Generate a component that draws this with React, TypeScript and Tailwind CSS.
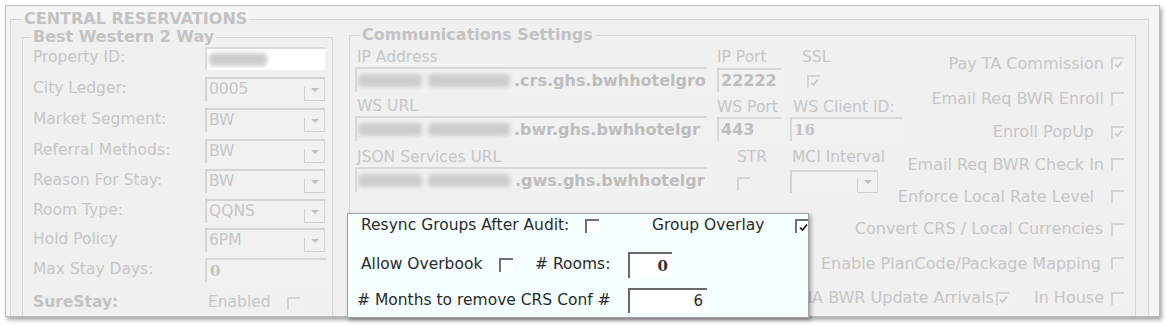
import type { ReactNode } from "react";

function Tick({ color }: { color: string }) {
  return (
    <svg width="11" height="11" viewBox="0 0 11 11" className="block">
      <path d="M2 5.5 L4.5 8 L9 2.5" fill="none" stroke={color} strokeWidth="1.6" />
    </svg>
  );
}

function GrayBox({ checked = false, className = "" }: { checked?: boolean; className?: string }) {
  return (
    <span
      className={`flex h-[13px] w-[13px] shrink-0 items-center justify-center border-t-2 border-l-2 border-t-[#d4d4d4] border-l-[#d4d4d4] bg-[#f2f2f2] ${className}`}
    >
      {checked && <Tick color="#c4c4c4" />}
    </span>
  );
}

function DarkBox({ checked = false, className = "" }: { checked?: boolean; className?: string }) {
  return (
    <span
      className={`flex h-[14px] w-[14px] shrink-0 items-center justify-center border-t-2 border-l-2 border-t-[#707070] border-l-[#707070] bg-white ${className}`}
    >
      {checked && <Tick color="#111111" />}
    </span>
  );
}

function Blur({ w }: { w: string }) {
  return <span className={`inline-block h-[13px] shrink-0 rounded-sm bg-[#cdcdcd] blur-[2px] ${w}`} />;
}

function Field({ children, className = "" }: { children?: ReactNode; className?: string }) {
  return (
    <div
      className={`flex items-center overflow-hidden whitespace-nowrap border-t-2 border-l-2 border-t-[#d8d8d8] border-l-[#d8d8d8] bg-[#f1f1f1] ${className}`}
    >
      {children}
    </div>
  );
}

function Select({ value = "", className = "" }: { value?: string; className?: string }) {
  return (
    <div
      className={`flex border-t-2 border-l-2 border-r border-t-[#d4d4d4] border-l-[#d4d4d4] border-r-[#d4d4d4] bg-[#f1f1f1] ${className}`}
    >
      <span className="flex-1 pl-[2px] leading-[21px] text-[#c6c6c6]">{value}</span>
      <span className="mt-auto flex h-[14px] w-[20px] items-start justify-center border-l border-b border-[#d0d0d0]">
        <svg width="8" height="4" viewBox="0 0 8 4" className="mt-[1px] block">
          <path d="M0 0h8L4 4z" fill="#bfbfbf" />
        </svg>
      </span>
    </div>
  );
}

const bwRows: { label: string; mt: string; field: ReactNode }[] = [
  {
    label: "Property ID:",
    mt: "mt-0",
    field: (
      <div className="flex h-[23px] w-[120px] items-center border-t-2 border-l-2 border-t-[#dcdcdc] border-l-[#dcdcdc] bg-white pl-[2px]">
        <Blur w="w-[58px]" />
      </div>
    ),
  },
  { label: "City Ledger:", mt: "mt-[7px]", field: <Select value="0005" className="h-[24px] w-[120px]" /> },
  { label: "Market Segment:", mt: "mt-[7px]", field: <Select value="BW" className="h-[24px] w-[120px]" /> },
  { label: "Referral Methods:", mt: "mt-[7px]", field: <Select value="BW" className="h-[24px] w-[120px]" /> },
  { label: "Reason For Stay:", mt: "mt-[6px]", field: <Select value="BW" className="h-[24px] w-[120px]" /> },
  { label: "Room Type:", mt: "mt-[6px]", field: <Select value="QQNS" className="h-[24px] w-[120px]" /> },
  { label: "Hold Policy", mt: "mt-[5px]", field: <Select value="6PM" className="h-[24px] w-[120px]" /> },
  {
    label: "Max Stay Days:",
    mt: "mt-[6px]",
    field: (
      <Field className="h-[24px] w-[122px] pl-[3px]">
        <span className="font-['DejaVu_Serif',serif] text-[15px] font-bold text-[#c3c3c3]">0</span>
      </Field>
    ),
  },
];

const rightRows: { label: string; h: string; checked: boolean; gap: string }[] = [
  { label: "Pay TA Commission", h: "h-[35px]", checked: true, gap: "mr-[7px]" },
  { label: "Email Req BWR Enroll", h: "h-[35px]", checked: false, gap: "mr-[7px]" },
  { label: "Enroll PopUp", h: "h-[32px]", checked: true, gap: "mr-[17px]" },
  { label: "Email Req BWR Check In", h: "h-[33px]", checked: false, gap: "mr-[7px]" },
  { label: "Enforce Local Rate Level", h: "h-[31px]", checked: false, gap: "mr-[17px]" },
  { label: "Convert CRS / Local Currencies", h: "h-[34px]", checked: false, gap: "mr-[8px]" },
  { label: "Enable PlanCode/Package Mapping", h: "h-[35px]", checked: false, gap: "mr-[10px]" },
];

function Label({ children, className = "" }: { children: ReactNode; className?: string }) {
  return <div className={`h-[20px] whitespace-nowrap leading-[20px] text-[#c6c6c6] ${className}`}>{children}</div>;
}

export default function App() {
  return (
    <div className="relative h-[326px] w-[1166px] overflow-hidden bg-white font-['DejaVu_Sans',sans-serif] text-[15.5px]">
      <div className="ml-[5px] mt-[5px] h-[312px] w-[1155px] overflow-hidden border border-[#bcbcbc] bg-[#f5f5f5] shadow-[2px_3px_4px_rgba(0,0,0,0.35)]">
        <fieldset className="ml-[4px] mt-[4px] h-[330px] w-[1139px] min-w-0 border border-[#d6d6d6] bg-[#f0f0f0] pl-[11px] pr-[12px]">
          <legend className="px-[2px] text-[16px] font-bold leading-[18px] text-[#c3c3c3]">CENTRAL RESERVATIONS</legend>
          <div className="flex gap-[16px]">
            {/* Best Western 2 Way */}
            <fieldset className="h-[320px] w-[311px] min-w-0 shrink-0 border border-[#d6d6d6] pl-[10px]">
              <legend className="-ml-[2px] px-[2px] text-[16px] font-bold leading-[18px] text-[#c3c3c3]">
                Best Western 2 Way
              </legend>
              <div className="flex flex-col">
                {bwRows.map((row) => (
                  <div key={row.label} className={`flex h-[24px] items-center ${row.mt}`}>
                    <span className="w-[172px] shrink-0 whitespace-nowrap text-[#c6c6c6]">{row.label}</span>
                    {row.field}
                  </div>
                ))}
                <div className="mt-[9px] flex h-[24px] items-center">
                  <span className="w-[175px] shrink-0 font-bold text-[#c3c3c3]">SureStay:</span>
                  <span className="w-[79px] shrink-0 text-[#c6c6c6]">Enabled</span>
                  <GrayBox />
                </div>
              </div>
            </fieldset>

            {/* Communications Settings */}
            <fieldset className="-mt-[2px] h-[320px] w-[787px] min-w-0 shrink-0 border border-[#d6d6d6] pl-[5px] pr-[11px]">
              <legend className="ml-[5px] px-[2px] text-[16px] font-bold leading-[18px] text-[#c3c3c3]">
                Communications Settings
              </legend>
              <div className="flex">
                <div className="flex w-[352px] shrink-0 flex-col">
                  <Label className="mt-[3px] pl-[2px]">IP Address</Label>
                  <Field className="h-[25px] w-[352px] pl-[1px] text-[16px] font-bold text-[#bdbdbd]">
                    <span className="flex w-[156px] shrink-0 gap-[6px]">
                      <Blur w="w-[64px]" />
                      <Blur w="w-[82px]" />
                    </span>
                    .crs.ghs.bwhhotelgro
                  </Field>
                  <Label className="mt-[4px] pl-[2px]">WS URL</Label>
                  <Field className="h-[25px] w-[352px] pl-[1px] text-[16px] font-bold text-[#bdbdbd]">
                    <span className="flex w-[156px] shrink-0 gap-[6px]">
                      <Blur w="w-[64px]" />
                      <Blur w="w-[82px]" />
                    </span>
                    .bwr.ghs.bwhhotelgr
                  </Field>
                  <Label className="mt-[6px] pl-[2px]">JSON Services URL</Label>
                  <Field className="h-[25px] w-[352px] pl-[1px] text-[16px] font-bold text-[#bdbdbd]">
                    <span className="flex w-[157px] shrink-0 gap-[6px]">
                      <Blur w="w-[64px]" />
                      <Blur w="w-[82px]" />
                    </span>
                    .gws.ghs.bwhhotelgr
                  </Field>
                </div>

                <div className="ml-[10px] flex w-[64px] shrink-0 flex-col">
                  <Label className="mt-[3px]">IP Port</Label>
                  <Field className="mt-[1px] h-[24px] w-[64px] pl-[2px] text-[16px] font-bold text-[#bdbdbd]">22222</Field>
                  <Label className="mt-[5px]">WS Port</Label>
                  <Field className="h-[24px] w-[64px] pl-[2px] text-[16px] font-bold text-[#bdbdbd]">443</Field>
                  <Label className="mt-[6px] pl-[20px]">STR</Label>
                  <GrayBox className="ml-[20px] mt-[10px]" />
                </div>

                <div className="ml-[9px] flex w-[113px] shrink-0 flex-col">
                  <Label className="mt-[3px] pl-[12px]">SSL</Label>
                  <GrayBox checked className="ml-[17px] mt-[8px]" />
                  <Label className="mt-[9px] pl-[3px]">WS Client ID:</Label>
                  <Field className="h-[24px] w-[113px] pl-[2px]">
                    <span className="font-['DejaVu_Serif',serif] text-[15px] font-bold text-[#c3c3c3]">16</span>
                  </Field>
                  <Label className="mt-[6px] pl-[2px]">MCI Interval</Label>
                  <Select className="mt-[3px] h-[23px] w-[88px]" />
                </div>

                <div className="flex min-w-0 flex-1 flex-col items-end pt-[2px] text-[16px] text-[#c6c6c6]">
                  {rightRows.map((row) => (
                    <div key={row.label} className={`flex items-center whitespace-nowrap ${row.h}`}>
                      <span className={row.gap}>{row.label}</span>
                      <GrayBox checked={row.checked} />
                    </div>
                  ))}
                  <div className="flex h-[34px] items-center whitespace-nowrap">
                    <span className="mr-[2px]">NA BWR Update Arrivals</span>
                    <GrayBox checked />
                    <span className="ml-[25px] mr-[7px]">In House</span>
                    <GrayBox />
                  </div>
                </div>
              </div>
            </fieldset>
          </div>
        </fieldset>
      </div>

      {/* Group options popup */}
      <div className="absolute left-[347px] top-[213px] h-[105px] w-[462px] overflow-hidden border border-[#a3a3a3] bg-[#f6ffff] text-[#2a2a2a] shadow-[2px_2px_4px_rgba(0,0,0,0.35)]">
        <div className="flex h-[24px] items-center whitespace-nowrap pl-[13px]">
          <span className="w-[224px] shrink-0">Resync Groups After Audit:</span>
          <DarkBox />
          <span className="ml-[53px] w-[143px] shrink-0">Group Overlay</span>
          <DarkBox checked />
        </div>
        <div className="mt-[14px] flex h-[26px] items-center whitespace-nowrap pl-[13px]">
          <span className="w-[138px] shrink-0">Allow Overbook</span>
          <DarkBox />
          <span className="ml-[22px] w-[93px] shrink-0"># Rooms:</span>
          <div className="flex h-[26px] w-[44px] items-center justify-end border-t-2 border-l-2 border-t-[#6a6a6a] border-l-[#6a6a6a] bg-white pr-[4px]">
            <span className="font-['DejaVu_Serif',serif] text-[15px] font-bold text-[#333]">0</span>
          </div>
        </div>
        <div className="mt-[10px] flex h-[25px] items-center whitespace-nowrap pl-[9px]">
          <span className="w-[271px] shrink-0"># Months to remove CRS Conf #</span>
          <div className="flex h-[25px] w-[79px] items-center justify-end border-t-2 border-l-2 border-t-[#6a6a6a] border-l-[#6a6a6a] bg-white pr-[4px] text-[15px]">
            6
          </div>
        </div>
      </div>
    </div>
  );
}
